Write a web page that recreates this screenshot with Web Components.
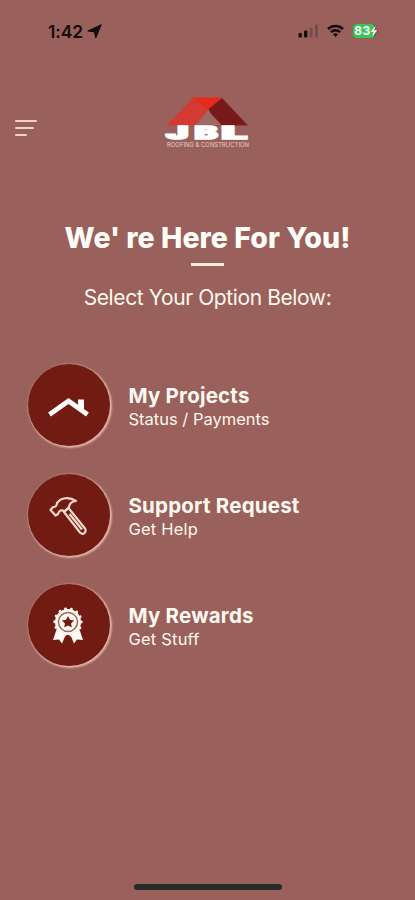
<!DOCTYPE html>
<html lang="en">
<head>
<meta charset="utf-8">
<meta name="viewport" content="width=device-width, initial-scale=1">
<title>JBL Roofing &amp; Construction</title>
<style>
  body {
    margin: 0;
    background: #9a605b;
    font-family: Inter, "Liberation Sans", sans-serif;
  }
</style>
</head>
<body>
<jbl-screen>
  <status-bar slot="status" time="1:42" battery="83"></status-bar>
  <app-header slot="header"></app-header>
  <welcome-title slot="title">
    We' re Here For You!
    <span slot="subtitle">Select Your Option Below:</span>
  </welcome-title>
  <option-row icon="roof">My Projects<span slot="detail">Status / Payments</span></option-row>
  <option-row icon="hammer">Support Request<span slot="detail" style="letter-spacing:.2px">Get Help</span></option-row>
  <option-row icon="award">My Rewards<span slot="detail" style="letter-spacing:.2px">Get Stuff</span></option-row>
</jbl-screen>

<script>
class JblScreen extends HTMLElement {
  connectedCallback() {
    const shadow = this.attachShadow({ mode: 'open' });
    shadow.innerHTML = `
      <style>
        :host {
          display: flex;
          flex-direction: column;
          box-sizing: border-box;
          width: 100%;
          height: 900px;
          overflow: hidden;
          color: #fff8ed;
        }
        .options {
          display: flex;
          flex-direction: column;
          gap: 28px;
          padding: 50px 28px 0;
        }
        .home {
          width: 148px;
          height: 6px;
          margin: auto auto 10px 134px;
          border-radius: 3px;
          background: #272c29;
        }
      </style>
      <slot name="status"></slot>
      <slot name="header"></slot>
      <slot name="title"></slot>
      <div class="options"><slot></slot></div>
      <div class="home"></div>`;
  }
}
customElements.define('jbl-screen', JblScreen);

class StatusBar extends HTMLElement {
  connectedCallback() {
    const shadow = this.attachShadow({ mode: 'open' });
    shadow.innerHTML = `
      <style>
        :host {
          display: flex;
          align-items: center;
          box-sizing: border-box;
          height: 62px;
          padding: 0 36px 0 48px;
          color: #140b0a;
        }
        .time { font-size: 17.5px; font-weight: 600; letter-spacing: -.1px; }
        .arrow { margin-left: 4px; }
        .signal { margin-left: auto; }
        .wifi { margin-left: 8px; }
        .battery {
          display: flex;
          align-items: center;
          margin-left: 8px;
        }
        svg { display: block; }
      </style>
      <span class="time">${this.getAttribute('time')}</span>
      <svg class="arrow" width="15" height="15" viewBox="0 0 15 15"><path fill="currentColor" d="M14.2.7 8.8 14 7.4 7.8.8 7Z" stroke="currentColor" stroke-width="1" stroke-linejoin="round"/></svg>
      <svg class="signal" width="21" height="14" viewBox="0 0 21 14">
        <g fill="currentColor">
          <rect x=".5" y="9" width="3.4" height="4.5" rx="1"/>
          <rect x="6" y="6.5" width="3.4" height="7" rx="1"/>
          <rect x="11.5" y="3.5" width="3" height="10" rx="1" opacity=".25"/>
          <rect x="17" y=".5" width="3" height="13" rx="1" opacity=".25"/>
        </g>
      </svg>
      <svg class="wifi" width="17" height="14" viewBox="0 0 17 14">
        <g fill="none" stroke="currentColor" stroke-width="2.5">
          <path d="M1 5C5.2 .9 11.8 .9 16 5"/>
          <path d="M3.9 8.2C6.5 5.7 10.5 5.7 13.1 8.2"/>
        </g>
        <path fill="currentColor" d="M5.8 10.2Q8.5 8.2 11.2 10.2L8.5 13Z"/>
      </svg>
      <div class="battery">
        <svg width="27" height="16" viewBox="0 0 27 16">
          <path d="M5 1h14.5q4 0 4 4v6q0 4-4 4H5q-4 0-4-4V5q0-4 4-4Z" fill="#6c3934"/>
          <path d="M5 1h14v14H5q-4 0-4-4V5q0-4 4-4Z" fill="#35c759"/>
          <path d="M19 1h1q2.5 .4 2.5 3v8q0 3-3.500 3Z" fill="#35c759"/>
          <path d="M24.7 5.500q2 2.500 0 5Z" fill="#6c3934"/>
          <text x="2.2" y="12.300" font-size="12" font-weight="700" textLength="16" fill="#fff">${this.getAttribute('battery')}</text>
          <path d="m23.5 2.800-5 6h3l-1.200 5 5-6.500h-3Z" fill="#fff"/>
        </svg>
      </div>`;
  }
}
customElements.define('status-bar', StatusBar);

class AppHeader extends HTMLElement {
  connectedCallback() {
    const shadow = this.attachShadow({ mode: 'open' });
    shadow.innerHTML = `
      <style>
        :host {
          display: grid;
          grid-template-columns: 1fr auto 1fr;
          align-items: start;
          box-sizing: border-box;
          height: 159px;
          padding: 34px 15px 0;
        }
        .menu {
          display: flex;
          flex-direction: column;
          gap: 5px;
          padding-top: 24px;
        }
        .menu i { height: 2px; background: #efd3c9; border-radius: 1px; }
        .menu i:nth-child(1) { width: 22px; }
        .menu i:nth-child(2) { width: 19px; }
        .menu i:nth-child(3) { width: 12px; }
        svg { display: block; }
      </style>
      <div class="menu"><i></i><i></i><i></i></div>
      <svg width="88" height="54" viewBox="0 0 88 54">
        <path fill="#d23a32" d="M2.500 29.500 29 2l15 11-8 16.500Z"/>
        <path fill="#781a19" d="m44 12 14-10 26 27.500H52Z"/>
        <path fill="#e8291f" d="M28 1.500h30.500L44 13.500Z"/>
        <path fill="#9c6a62" d="M44 14.500 58 29.500H31Z"/>
        <!-- wide slab lettering -->
        <g fill="#fff" stroke="#fff" stroke-width="1.6" font-size="17" font-weight="900">
          <text transform="translate(2 42.800) scale(2.200 1)">J</text>
          <text transform="translate(30.5 42.800) scale(2.050 1)">B</text>
          <text transform="translate(57.500 42.800) scale(2.650 1)">L</text>
        </g>
        <text x="3" y="51.3" font-size="6.2" textLength="82" lengthAdjust="spacingAndGlyphs" fill="#e8cdc8">ROOFING &amp; CONSTRUCTION</text>
      </svg>`;
  }
}
customElements.define('app-header', AppHeader);

class WelcomeTitle extends HTMLElement {
  connectedCallback() {
    const shadow = this.attachShadow({ mode: 'open' });
    shadow.innerHTML = `
      <style>
        :host {
          display: flex;
          flex-direction: column;
          align-items: center;
          height: 93px;
          white-space: nowrap;
        }
        h1 {
          margin: 0;
          font-size: 28.5px;
          line-height: 34px;
          font-weight: 800;
          letter-spacing: .05px;
          color: #fffdf7;
        }
        hr { flex: none; width: 33px; height: 3px; margin: 8px 0 15px; border: 0; background: #f9e9dc; }
        p { margin: 0; font-size: 21px; line-height: 34px; letter-spacing: -.4px; }
      </style>
      <h1><slot></slot></h1>
      <hr>
      <p><slot name="subtitle"></slot></p>`;
  }
}
customElements.define('welcome-title', WelcomeTitle);

const ICONS = {
  roof: `<path d="M2.500 30.500 21.500 17 40.500 30.500" fill="none" stroke="#fff" stroke-width="4.800"/>
    <path d="M31 15.500h6v11.500l-6-4.500Z" fill="#fff"/>`,
  hammer: `<g fill="none" stroke="#f3d8cd" stroke-width="2.2" stroke-linejoin="round">
      <path d="M10 9C14 3.500 22 2.500 29 7C24.500 7.300 22.500 9 22 13L17.500 17.500C14.500 15.500 12 16 11 20L8.500 21.500 3.500 16 6 13C8 13.500 10 12 10 9Z"/>
      <path d="m17 18 4.500-4L38 34.500Q39.500 37 37.500 39T33 38.500Z"/>
      <path d="m22.500 20 12.500 15.500"/>
    </g>`,
  award: `<g fill="#fffaf3">
      <path d="m10 24-4 12 6-.5 3 4 5-12h2l5 12 3-4 6 .5-4-12Z"/>
      <circle cx="21" cy="18" r="13"/>
    </g>
    <circle cx="21" cy="18" r="13.300" fill="none" stroke="#fffaf3" stroke-width="2.800" stroke-linecap="round" stroke-dasharray=".1 5.870"/>
    <circle cx="21" cy="18" r="9.500" fill="none" stroke="#a5665d" stroke-width="1.500"/>
    <path fill="#721b12" d="m21 12 1.900 3.800 4.200.6-3 3 .7 4.200-3.800-2-3.800 2 .7-4.200-3-3 4.200-.6Z"/>`
};

class OptionRow extends HTMLElement {
  connectedCallback() {
    const shadow = this.attachShadow({ mode: 'open' });
    shadow.innerHTML = `
      <style>
        :host { display: flex; height: 82px; white-space: nowrap; }
        .circle {
          display: flex;
          align-items: center;
          justify-content: center;
          width: 82px;
          height: 82px;
          border-radius: 50%;
          background: #721b12;
          box-shadow: 1px 1px 2px 1px #e1b5a8;
        }
        .circle svg { margin-right: 2px; }
        .text { padding: 20px 0 0 18.5px; }
        .name {
          font-size: 20.5px;
          line-height: 24px;
          font-weight: 700;
          letter-spacing: .2px;
          color: #fffaf1;
        }
        .detail { font-size: 16.5px; line-height: 22px; }
      </style>
      <div class="circle"><svg width="42" height="42" viewBox="0 0 42 42">${ICONS[this.getAttribute('icon')]}</svg></div>
      <div class="text">
        <div class="name"><slot></slot></div>
        <div class="detail"><slot name="detail"></slot></div>
      </div>`;
  }
}
customElements.define('option-row', OptionRow);
</script>
</body>
</html>
